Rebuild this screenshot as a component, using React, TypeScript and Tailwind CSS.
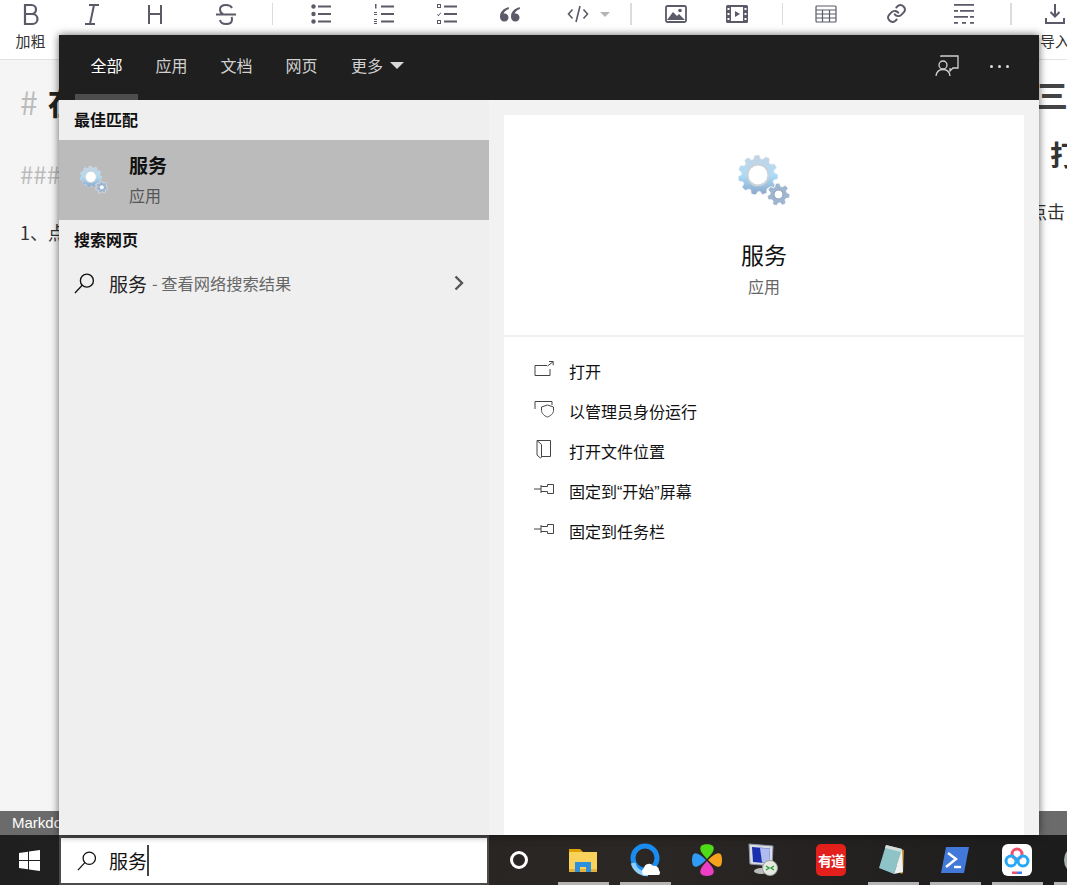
import React from 'react';

const cjk = "font-['Noto_Sans_CJK_SC','Liberation_Sans',sans-serif]";

// Gear outline used by the services icon
const gearPath = (cx: number, cy: number, outer: number, inner: number, teeth: number) => {
  const pts: string[] = [];
  const step = (Math.PI * 2) / teeth;
  for (let i = 0; i < teeth; i++) {
    const a = i * step - Math.PI / 2;
    const offsets: [number, number][] = [
      [-0.5, inner],
      [-0.28, outer],
      [0.1, outer],
      [0.28, inner],
    ];
    offsets.forEach(([o, r]) => {
      const t = a + o * step;
      pts.push(`${(cx + Math.cos(t) * r).toFixed(2)},${(cy + Math.sin(t) * r).toFixed(2)}`);
    });
  }
  return `M${pts.join('L')}Z`;
};

const GearIcon = ({ size, id }: { size: number; id: string }) => (
  <svg width={size} height={size} viewBox="0 0 52 52">
    <defs>
      <linearGradient id={id} x1="0" y1="0" x2="0" y2="1">
        <stop offset="0" stopColor="#c8d3e0" />
        <stop offset="0.5" stopColor="#acdcf8" />
        <stop offset="1" stopColor="#8ba6c8" />
      </linearGradient>
    </defs>
    <path d={gearPath(20, 20, 20, 16.5, 11)} fill={`url(#${id})`} stroke="#e6eef5" strokeWidth="0.6" />
    <circle cx="20" cy="20" r="10.5" fill="#fff" stroke="#c9d2d8" strokeWidth="2" />
    <path d={gearPath(40.5, 39.5, 11.5, 8.5, 7)} fill="#a0b6d0" stroke="#fff" strokeWidth="0.8" />
    <circle cx="40.5" cy="39.5" r="4.4" fill="#fff" stroke="#7f97b5" strokeWidth="0.8" />
  </svg>
);

const SearchGlass = ({ size = 22, color = '#111' }: { size?: number; color?: string }) => (
  <svg width={size} height={size} viewBox="0 0 22 22" fill="none" stroke={color} strokeWidth="1.4">
    <circle cx="13.5" cy="8" r="6.8" />
    <path d="M8.6 12.8 1 21" />
  </svg>
);

const ic = '#5a5a68';

const PinIcon = () => (
  <svg width="20" height="14" viewBox="0 0 20 14" fill="none" stroke="#444" strokeWidth="1">
    <path d="M0 7h7M7 3v8M7 4.500h6.500V2.500h6v9h-6v-2H7" />
  </svg>
);

const toolbar: { w: string; node: React.ReactNode; label?: string }[] = [
  {
    w: 'w-[61px]',
    label: '加粗',
    node: (
      <svg width="16" height="24" viewBox="0 0 16 24" fill="none" stroke={ic} strokeWidth="2.200">
        <path d="M2 3h6.500a4.500 4.500 0 0 1 0 9H2zM2 12h7.500a5 5 0 0 1 0 10H2z" />
      </svg>
    ),
  },
  {
    w: 'w-[62px]',
    node: (
      <svg width="20" height="24" viewBox="0 0 20 24" fill="none" stroke={ic} strokeWidth="2">
        <path d="M7 3h10M3 22h10M12 3 8 22" />
      </svg>
    ),
  },
  {
    w: 'w-[63px]',
    node: (
      <svg width="20" height="24" viewBox="0 0 20 24" fill="none" stroke={ic} strokeWidth="2">
        <path d="M4 3v19M16 3v19M4 12h12" />
      </svg>
    ),
  },
  {
    w: 'w-[80px]',
    node: (
      <svg width="22" height="24" viewBox="0 0 22 24" fill="none" stroke={ic} strokeWidth="2">
        <path d="M1 12.5h20M17 6c-1-2-3-3-6-3-3.500 0-6 1.500-6 4.500 0 2 1 3.500 3 4.500M16.500 15c.5 1 .5 1.500.5 2.500 0 3-2.500 4.500-6 4.500-3 0-5.500-1.500-6-4" />
      </svg>
    ),
  },
  { w: 'w-[12px]', node: <div className="h-[22px] w-px bg-[#dcdcdc]" /> },
  {
    w: 'w-[76px]',
    node: (
      <svg className="translate-x-[5px]" width="20" height="20" viewBox="0 0 20 20" fill={ic}>
        <circle cx="2.500" cy="2.500" r="2.200" />
        <circle cx="2.500" cy="10" r="2.200" />
        <circle cx="2.500" cy="17.500" r="2.200" />
        <path d="M7 1.500h13v2H7zM7 9h13v2H7zM7 16.500h13v2H7z" />
      </svg>
    ),
  },
  {
    w: 'w-[60px]',
    node: (
      <svg width="20" height="20" viewBox="0 0 20 20" fill={ic}>
        <path d="M1 0h1.500v4.500H1zM0 8h3v1H0zM0 10h3v1H0zM0 15h3v1H0zM0 17h3v1H0zM0 19h3v1H0z" />
        <path d="M7 1.500h13v2H7zM7 9h13v2H7zM7 16.500h13v2H7z" />
      </svg>
    ),
  },
  {
    w: 'w-[66px]',
    node: (
      <svg width="20" height="20" viewBox="0 0 20 20" fill={ic}>
        <path fillRule="evenodd" d="M0 0h4v4H0zM1 1v2h2V1zM0 16h4v4H0zM1 17v2h2v-2z" />
        <path d="M.5 10l1 1 2-2.500.6.500-2.600 3.200L0 10.500z" />
        <path d="M7 1.500h13v2H7zM7 9h13v2H7zM7 16.500h13v2H7z" />
      </svg>
    ),
  },
  {
    w: 'w-[60px]',
    node: (
      <svg width="20" height="16" viewBox="0 0 20 16" fill={ic}>
        <path d="M8.500 1C4 2.500 0 5.500 0 10.500 0 13.500 2 15.500 4.500 15.500s4-2 4-4-1.500-4-4-4c-.5 0-.8 0-1 .1C4.300 5.500 6 4 9 3zM19.500 1c-4.500 1.500-8.500 4.500-8.500 9.500 0 3 2 5 4.500 5s4-2 4-4-1.500-4-4-4c-.5 0-.8 0-1 .1.800-2.100 2.500-3.600 5.500-4.600z" />
      </svg>
    ),
  },
  {
    w: 'w-[76px]',
    node: (
      <div className="relative flex items-center">
        <svg width="22" height="18" viewBox="0 0 22 18" fill="none" stroke={ic} strokeWidth="1.600">
          <path d="M5.500 4.500 1.500 9l4 4.500M16.500 4.500l4 4.500-4 4.500M13 1 9 17" />
        </svg>
        <div className="absolute left-[33px] top-[7px] h-0 w-0 border-x-[5px] border-t-[5px] border-x-transparent border-t-[#b5b5b5]" />
      </div>
    ),
  },
  { w: 'w-[30px]', node: <div className="h-[22px] w-[2px] bg-[#dcdcdc]" /> },
  {
    w: 'w-[60px]',
    node: (
      <svg width="22" height="18" viewBox="0 0 22 18">
        <rect x="1" y="1" width="20" height="16" rx="1.500" fill="none" stroke={ic} strokeWidth="1.800" />
        <path d="M2 15 8 7l4 4 2-2 6 6z" fill={ic} />
        <circle cx="15" cy="5.500" r="1.800" fill={ic} />
      </svg>
    ),
  },
  {
    w: 'w-[62px]',
    node: (
      <svg width="22" height="18" viewBox="0 0 22 18">
        <rect x="0" y="0" width="22" height="18" rx="1.500" fill={ic} />
        <rect x="5" y="2" width="12" height="14" fill="#fff" />
        <path d="M9 6v6l5-3z" fill={ic} />
        <path d="M1.500 3h2v2h-2zM1.500 8h2v2h-2zM1.500 13h2v2h-2zM18.500 3h2v2h-2zM18.500 8h2v2h-2zM18.500 13h2v2h-2z" fill="#fff" />
      </svg>
    ),
  },
  { w: 'w-[28px]', node: <div className="h-[22px] w-px bg-[#dcdcdc]" /> },
  {
    w: 'w-[60px]',
    node: (
      <svg width="22" height="18" viewBox="0 0 22 18" fill="none" stroke={ic} strokeWidth="1.200">
        <rect x="1" y="1" width="20" height="16" rx="1" />
        <path d="M1 5h20M1 9h20M1 13h20M7.500 5v12M14.500 5v12" />
      </svg>
    ),
  },
  {
    w: 'w-[80px]',
    node: (
      <svg width="21" height="21" viewBox="0 0 24 24" fill="none" stroke={ic} strokeWidth="2.200" strokeLinecap="round">
        <path d="M10 13a5 5 0 0 0 7.500.5l3-3a5 5 0 0 0-7-7l-1.700 1.700" />
        <path d="M14 11a5 5 0 0 0-7.500-.5l-3 3a5 5 0 0 0 7 7l1.700-1.700" />
      </svg>
    ),
  },
  {
    w: 'w-[56px]',
    node: (
      <svg width="20" height="20" viewBox="0 0 20 20" fill={ic}>
        <path d="M0 0h20v1.800H0zM0 6h4v1.800H0zM6 6h14v1.800H6zM0 12h14v1.800H0zM16 12h4v1.800h-4zM0 18h4v1.800H0zM8 18h4v1.800H8zM16 18h4v1.800h-4z" />
      </svg>
    ),
  },
  { w: 'w-[38px]', node: <div className="h-[22px] w-[2px] bg-[#dcdcdc]" /> },
  {
    w: 'w-[50px]',
    label: '导入',
    node: (
      <svg width="20" height="20" viewBox="0 0 20 20" fill="none" stroke={ic} strokeWidth="2">
        <path d="M10 0v12M5.500 8l4.500 4.500L14.500 8M1 14v5h18v-5" />
      </svg>
    ),
  },
];

const actions: { label: string; icon: React.ReactNode }[] = [
  {
    label: '打开',
    icon: (
      <svg width="20" height="16" viewBox="0 0 20 16" fill="none" stroke="#444" strokeWidth="1">
        <path d="M13 4.500H1v10h15V8M13.500 5 19 .8M15 .5h4.200v3.800" />
      </svg>
    ),
  },
  {
    label: '以管理员身份运行',
    icon: (
      <svg width="20" height="18" viewBox="0 0 20 18" fill="none" stroke="#444" strokeWidth="1">
        <path d="M1 9V1.500h17V5M7.500 7 13.500 5l6 2v3.500c0 3-3 5.500-6 6.500-3-1-6-3.500-6-6.500z" />
      </svg>
    ),
  },
  {
    label: '打开文件位置',
    icon: (
      <svg width="20" height="20" viewBox="0 0 20 20" fill="none" stroke="#444" strokeWidth="1">
        <path d="M3 1.500h13.500v16H7.500M3 1.500l4.500 4v12.500l-1 1.200L3 16z" />
      </svg>
    ),
  },
  { label: '固定到“开始”屏幕', icon: <PinIcon /> },
  { label: '固定到任务栏', icon: <PinIcon /> },
];

const taskIcons: { active: boolean; icon: React.ReactNode }[] = [
  {
    active: true,
    icon: (
      <svg width="30" height="30" viewBox="0 0 30 30">
        <path d="M1 4h11l3 3v3H1z" fill="#e0a100" />
        <path d="M1 7h28v20H1z" fill="#f9d25c" />
        <path d="M1 24h28v3H1z" fill="#e8b23a" />
        <path d="M7 27v-10h16v10h-5v-5h-6v5z" fill="#2e8fdc" />
      </svg>
    ),
  },
  {
    active: true,
    icon: (
      <svg width="30" height="34" viewBox="0 0 30 34">
        <circle cx="15" cy="15" r="12" fill="none" stroke="#1a8cf0" strokeWidth="5" />
        <path d="M3 20c2 8 9 11 15 11" fill="none" stroke="#8fd0fa" strokeWidth="4.500" />
        <path d="M14 32a4 4 0 0 1 0-7 5 5 0 0 1 9-2 4.500 4.500 0 0 1 6 4.500 3 3 0 0 1 0 4.500z" fill="#fff" />
      </svg>
    ),
  },
  {
    active: false,
    icon: (
      <svg width="30" height="34" viewBox="0 0 30 34">
        <path d="M15 16C9 10 7 6 9 3c2-2.500 10-2.500 12 0 2 3 0 7-6 13z" fill="#4fdc16" />
        <path d="M15 18c-6 6-8 10-6 13 2 2.500 10 2.500 12 0 2-3 0-7-6-13z" fill="#ee3fc4" />
        <path d="M14 17C8 11 4 9 1.500 11c-2 2-2 10 0 12 2.500 2 6.500 0 12.500-6z" fill="#2f9bf5" />
        <path d="M16 17c6-6 10-8 12.500-6 2 2 2 10 0 12-2.500 2-6.500 0-12.500-6z" fill="#f5a31d" />
      </svg>
    ),
  },
  {
    active: false,
    icon: (
      <svg width="30" height="34" viewBox="0 0 30 34" className="-translate-x-[6px]">
        <path d="M1 1l24 2-1 20L2 21z" fill="#d8dde6" stroke="#8e95a4" />
        <path d="M4 4l18 1.500-1 15L5 19z" fill="#1a2fae" />
        <path d="M12 5l10 .5-1 15-7-1z" fill="#aebcf0" />
        <ellipse cx="13" cy="28" rx="7" ry="3" fill="#b9bcb8" />
        <circle cx="22" cy="25" r="7.500" fill="#e4e8e0" stroke="#9aa09a" />
        <path d="M18 27l3-2-3-2M26 23l-3 2 3 2" fill="none" stroke="#2d9b3c" strokeWidth="1.400" />
      </svg>
    ),
  },
  {
    active: false,
    icon: (
      <div className={`flex h-[32px] w-[30px] items-center justify-center rounded-[5px] bg-[#e3201b] text-[14px] font-bold leading-none tracking-[-1px] text-white ${cjk}`}>
        有道
      </div>
    ),
  },
  {
    active: true,
    icon: (
      <svg width="30" height="32" viewBox="0 0 30 32">
        <path d="M9 2l17 4-1 23-2 1z" fill="#c08a2a" />
        <path d="M8 1l16 4-8 25L1 24z" fill="#8ec3c8" />
        <path d="M8 1l16 4-1 3L7 4z" fill="#d5dcdc" />
        <path d="M16 30l8-25 1 23z" fill="#f0f2f2" />
      </svg>
    ),
  },
  {
    active: true,
    icon: (
      <svg width="30" height="28" viewBox="0 0 30 28">
        <path d="M6 1h23l-5 26H1z" fill="#4279d8" />
        <path d="M8 7l8 6-10 8" fill="none" stroke="#fff" strokeWidth="2.400" />
        <path d="M14 21h7" stroke="#fff" strokeWidth="2.400" />
      </svg>
    ),
  },
  {
    active: true,
    icon: (
      <div className="flex h-[32px] w-[30px] items-center justify-center rounded-[6px] bg-white">
        <svg width="26" height="28" viewBox="0 0 26 28" fill="none" strokeWidth="3">
          <circle cx="13" cy="8" r="5" stroke="#f0506e" />
          <circle cx="7" cy="15" r="5" stroke="#25a8f5" />
          <circle cx="19" cy="15" r="5" stroke="#25a8f5" />
          <path d="M8 27h5" stroke="#f0506e" />
          <path d="M13 27h5" stroke="#3a7cf0" />
        </svg>
      </div>
    ),
  },
  {
    active: true,
    icon: <div className="h-[30px] w-[30px] rounded-full bg-[#a9b3ac]" />,
  },
];

const tabs = ['全部', '应用', '文档', '网页'];

export default function App() {
  return (
    <div className={`relative flex h-[885px] w-full flex-col overflow-hidden bg-white ${cjk}`}>
      {/* Editor behind the search panel */}
      <div className="flex h-[60px] shrink-0 border-b border-[#e2e2e2] bg-white">
        {toolbar.map((item, i) => (
          <div key={i} className={`flex shrink-0 flex-col items-center ${item.w}`}>
            <div className="flex h-[27px] items-center">{item.node}</div>
            {item.label && <span className="mt-[4px] whitespace-nowrap text-[15px] leading-[20px] text-[#333]">{item.label}</span>}
          </div>
        ))}
      </div>
      <div className="flex flex-1 overflow-hidden">
        <div className="w-[533px] shrink-0 bg-[#f5f5f5] pl-[20px] pt-[21px]">
          <div className="flex items-center gap-[10px] text-[32px] leading-[40px]">
            <span className="text-[#bbb]">#</span>
            <span className="font-bold text-[#222]">在</span>
          </div>
          <div className="mt-[37px] text-[24px] leading-[32px] text-[#bbb]">###</div>
          <div className="mt-[30px] text-[18px] leading-[24px] text-[#333]">1、点</div>
        </div>
        <div className="flex-1 overflow-hidden bg-white pl-[503px] pt-[14px]">
          <div className="text-[32px] font-bold leading-[40px] text-[#444]">三</div>
          <div className="ml-[14px] mt-[22px] whitespace-nowrap text-[28px] font-bold leading-[36px] text-[#333]">打开</div>
          <div className="-ml-[7px] mt-[27px] whitespace-nowrap text-[18px] leading-[24px] text-[#333]">点击</div>
        </div>
      </div>
      <div className="flex h-[24px] shrink-0 items-center bg-[#6b6b6b] pl-[12px] font-['Liberation_Sans',sans-serif] text-[15px] text-white">
        Markdown
      </div>

      {/* Taskbar */}
      <div className="flex h-[50px] shrink-0 bg-[linear-gradient(90deg,#1f1f1f,#2b2725_60%,#1c1c1c)]">
        <div className="flex w-[59px] shrink-0 items-center justify-center">
          <svg width="21" height="21" viewBox="0 0 21 21" fill="#fff">
            <path d="M0 3l9-1.300V10H0zM10 1.500 21 0v10H10zM0 11h9v8.300L0 18zM10 11h11v10l-11-1.500z" />
          </svg>
        </div>
        <div className="flex h-full w-[430px] shrink-0 bg-[#4b4b4b] px-[2px] pb-[2px] pt-[3px]">
          <div className="flex flex-1 items-center bg-white pl-[16px]">
            <SearchGlass size={20} />
            <span className="ml-[12px] text-[19px] leading-none text-[#111]">服务</span>
            <div className="h-[31px] w-[2px] bg-[#444]" />
          </div>
        </div>
        <div className="flex w-[63px] shrink-0 items-center justify-center pr-[3px]">
          <div className="h-[18px] w-[18px] rounded-full border-[3px] border-white" />
        </div>
        {taskIcons.map((t, i) => (
          <div key={i} className="relative flex w-[62px] shrink-0 items-center justify-center">
            {t.icon}
            {t.active && <div className="absolute bottom-0 left-[6px] h-[3px] w-[51px] bg-[#b4b4b4]" />}
          </div>
        ))}
      </div>

      {/* Search panel */}
      <div className="absolute left-[59px] top-[35px] flex h-[800px] w-[980px] flex-col shadow-[0_0_8px_rgba(0,0,0,0.6)]">
        <div className="flex h-[65px] shrink-0 items-stretch bg-[#1f1f1f] pl-[16px] pr-[30px] text-[16px] text-[#d0d0d0]">
          {tabs.map((tab, i) => (
            <div
              key={tab}
              className={`mr-[2px] flex w-[63px] items-center justify-center border-b-[6px] pt-[1px] ${i === 0 ? 'border-[#4d4d4d] text-white' : 'border-transparent'}`}
            >
              {tab}
            </div>
          ))}
          <div className="ml-[16px] flex items-center gap-[7px] pb-[5px]">
            更多
            <div className="h-0 w-0 border-x-[7px] border-t-[7px] border-x-transparent border-t-[#d8d8d8]" />
          </div>
          <div className="ml-auto flex items-center gap-[31px] pb-[3px]">
            <svg width="24" height="22" viewBox="0 0 24 22" fill="none" stroke="#d0d0d0" strokeWidth="1.300">
              <path d="M6 2V1h17v12h-5l-3 3v-3" />
              <circle cx="8" cy="10" r="4" />
              <path d="M1 21c.5-4 3-6.500 7-6.500s6.500 2.500 7 6.500" />
            </svg>
            <div className="flex gap-[5px]">
              <div className="h-[3px] w-[3px] rounded-full bg-[#ddd]" />
              <div className="h-[3px] w-[3px] rounded-full bg-[#ddd]" />
              <div className="h-[3px] w-[3px] rounded-full bg-[#ddd]" />
            </div>
          </div>
        </div>

        <div className="flex flex-1 overflow-hidden">
          <div className="flex w-[430px] shrink-0 flex-col bg-[#efefef]">
            <div className="flex h-[40px] items-center pb-[2px] pl-[15px] text-[16px] font-bold text-[#111]">最佳匹配</div>
            <div className="flex h-[80px] items-center bg-[#bbbbbb] pl-[21px]">
              <GearIcon size={28} id="gear-small" />
              <div className="ml-[21px] flex flex-col">
                <span className="text-[19px] font-bold leading-[30px] text-[#111]">服务</span>
                <span className="text-[16px] leading-[30px] text-[#555]">应用</span>
              </div>
            </div>
            <div className="flex h-[40px] items-center pb-[2px] pl-[15px] text-[16px] font-bold text-[#111]">搜索网页</div>
            <div className="flex h-[46px] items-center pl-[15px] pr-[24px]">
              <SearchGlass size={21} />
              <span className="ml-[14px] text-[19px] leading-none text-[#222]">服务</span>
              <span className="ml-[5px] text-[16.250px] leading-none text-[#666]">- 查看网络搜索结果</span>
              <svg className="ml-auto" width="12" height="16" viewBox="0 0 12 16" fill="none" stroke="#555" strokeWidth="2.400">
                <path d="M2.500 1.500 9 8l-6.500 6.500" />
              </svg>
            </div>
          </div>

          <div className="flex flex-1 bg-[#f2f2f2] px-[15px] pt-[15px]">
            <div className="flex flex-1 flex-col bg-white">
              <div className="flex h-[222px] shrink-0 flex-col items-center border-b-2 border-[#f0f0f0] pt-[40px]">
                <GearIcon size={52} id="gear-large" />
                <span className="mt-[31px] text-[23px] leading-[32px] text-[#111]">服务</span>
                <span className="mt-[5px] text-[16px] leading-[22px] text-[#666]">应用</span>
              </div>
              <div className="flex flex-col pt-[16px]">
                {actions.map(a => (
                  <div key={a.label} className="flex h-[40px] items-center pl-[30px]">
                    <div className="flex w-[35px] shrink-0 -translate-y-[4px]">{a.icon}</div>
                    <span className="font-['Liberation_Sans','Noto_Sans_CJK_SC',sans-serif] text-[16px] leading-none text-[#111]">{a.label}</span>
                  </div>
                ))}
              </div>
            </div>
          </div>
        </div>
      </div>
    </div>
  );
}
